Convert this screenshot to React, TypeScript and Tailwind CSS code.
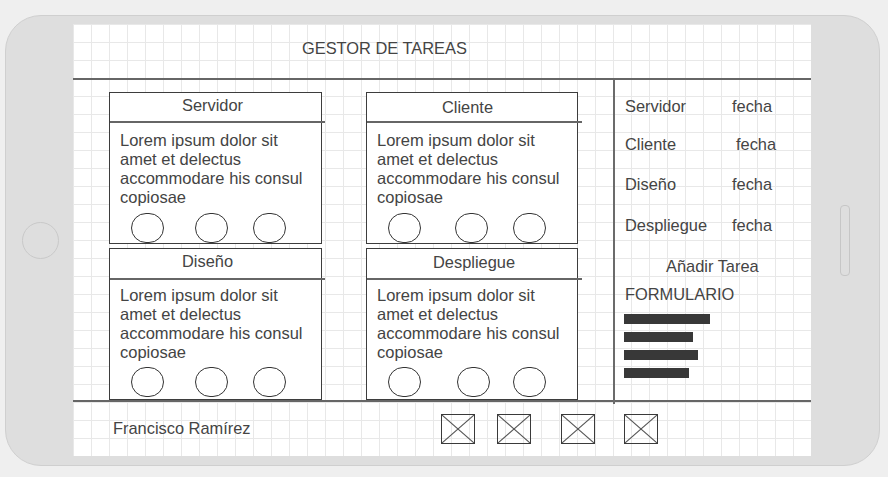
import React from "react";

type Card = {
  title: string;
  titleCls: string;
  bodyCls: string;
  circlesCls: string;
  gaps: [string, string];
};

const cards: Card[] = [
  {
    title: "Servidor",
    titleCls: "pl-[72px] pt-[3px]",
    bodyCls: "pt-[8px]",
    circlesCls: "mt-[6px] ml-[21px]",
    gaps: ["ml-[31px]", "ml-[25px]"],
  },
  {
    title: "Cliente",
    titleCls: "pl-[75px] pt-[5px]",
    bodyCls: "pt-[8px]",
    circlesCls: "mt-[6px] ml-[21px]",
    gaps: ["ml-[34px]", "ml-[25px]"],
  },
  {
    title: "Diseño",
    titleCls: "pl-[72px] pt-[3px]",
    bodyCls: "pt-[6px]",
    circlesCls: "mt-[5px] ml-[21px]",
    gaps: ["ml-[31px]", "ml-[25px]"],
  },
  {
    title: "Despliegue",
    titleCls: "pl-[66px] pt-[4px]",
    bodyCls: "pt-[6px]",
    circlesCls: "mt-[5px] ml-[21px]",
    gaps: ["ml-[36px]", "ml-[23px]"],
  },
];

const lorem = ["Lorem ipsum dolor sit", "amet et delectus", "accommodare his consul", "copiosae"];

function TaskCard({ card }: { card: Card }) {
  return (
    <div className="h-[152px] border border-[#3d3d3d] bg-white flex flex-col">
      <div className={`h-[29px] text-[16.4px] leading-[19px] ${card.titleCls}`}>{card.title}</div>
      <div className="h-[2px] w-[215px] bg-[#666] shrink-0" />
      <div className={`pl-[10px] text-[16.5px] leading-[19px] ${card.bodyCls}`}>
        {lorem.map((l) => (
          <div key={l} className="whitespace-nowrap">
            {l}
          </div>
        ))}
      </div>
      <div className={`flex ${card.circlesCls}`}>
        <div className="w-[33px] h-[30px] rounded-full border border-[#333]" />
        <div className={`w-[33px] h-[30px] rounded-full border border-[#333] ${card.gaps[0]}`} />
        <div className={`w-[33px] h-[30px] rounded-full border border-[#333] ${card.gaps[1]}`} />
      </div>
    </div>
  );
}

function XBox({ cls }: { cls: string }) {
  return (
    <div className={`w-[34px] h-[30px] border-[1.5px] border-[#3a3a3a] ${cls}`}>
      <svg width="100%" height="100%" viewBox="0 0 31 27" preserveAspectRatio="none">
        <line x1="0" y1="0" x2="31" y2="27" stroke="#555" strokeWidth="1" />
        <line x1="31" y1="0" x2="0" y2="27" stroke="#555" strokeWidth="1" />
      </svg>
    </div>
  );
}

export default function App() {
  return (
    <div className="w-[888px] h-[477px] bg-[#efefef] pt-[15px] pl-[5px] text-[#444] font-['Liberation_Sans',Arial,sans-serif]">
      {/* phone body */}
      <div className="w-[875px] h-[451px] rounded-[36px] border border-[#cfcfcf] bg-[#dedede] flex">
        <div className="w-[67px] flex items-center justify-center pl-[2px]">
          <div className="w-[37px] h-[37px] rounded-full border border-[#c9c9c9]" />
        </div>

        {/* screen */}
        <div className="mt-[8px] w-[738px] h-[432px] bg-white bg-[linear-gradient(to_right,#e8e8e8_1px,transparent_1px),linear-gradient(to_bottom,#e8e8e8_1px,transparent_1px)] bg-size-[18px_18px] bg-[length:18px_18px] flex flex-col">
          <div className="h-[54px] pl-[229px] pt-[15px] text-[16.4px] leading-[19px]">GESTOR DE TAREAS</div>
          <div className="h-[2px] bg-[#666]" />

          <div className="h-[320px] flex">
            <div className="w-[540px] pl-[36px] pt-[12px] grid grid-cols-[213px_212px] gap-x-[44px] gap-y-[4px] content-start">
              {cards.map((c) => (
                <TaskCard key={c.title} card={c} />
              ))}
            </div>
            <div className="w-[2px] h-[324px] bg-[#6b6b6b] relative z-10" />
            <div className="flex-1 pl-[10px] text-[16.4px] leading-[19px]">
              <div className="mt-[17px] flex">
                <span className="w-[107px]">Servidor</span>
                <span>fecha</span>
              </div>
              <div className="mt-[19px] flex">
                <span className="w-[111px]">Cliente</span>
                <span>fecha</span>
              </div>
              <div className="mt-[21px] flex">
                <span className="w-[107px]">Diseño</span>
                <span>fecha</span>
              </div>
              <div className="mt-[22px] flex">
                <span className="w-[107px]">Despliegue</span>
                <span>fecha</span>
              </div>
              <div className="mt-[22px] pl-[41px]">Añadir Tarea</div>
              <div className="mt-[9px]">FORMULARIO</div>
              <div className="mt-[10px] flex flex-col gap-[8px] -ml-[1px]">
                <div className="h-[10px] w-[86px] bg-[#383838]" />
                <div className="h-[10px] w-[69px] bg-[#383838]" />
                <div className="h-[10px] w-[74px] bg-[#383838]" />
                <div className="h-[10px] w-[65px] bg-[#383838]" />
              </div>
            </div>
          </div>

          <div className="h-[2px] bg-[#666]" />
          <div className="flex-1 flex items-start">
            <div className="w-[368px] pl-[40px] pt-[17px] text-[16.4px] leading-[19px]">Francisco Ramírez</div>
            <div className="flex pt-[12px]">
              <XBox cls="" />
              <XBox cls="ml-[22px]" />
              <XBox cls="ml-[30px]" />
              <XBox cls="ml-[29px]" />
            </div>
          </div>
        </div>

        <div className="flex-1 flex items-center justify-center">
          <div className="w-[10px] h-[71px] rounded-[4px] border border-[#c6c6c6]" />
        </div>
      </div>
    </div>
  );
}
